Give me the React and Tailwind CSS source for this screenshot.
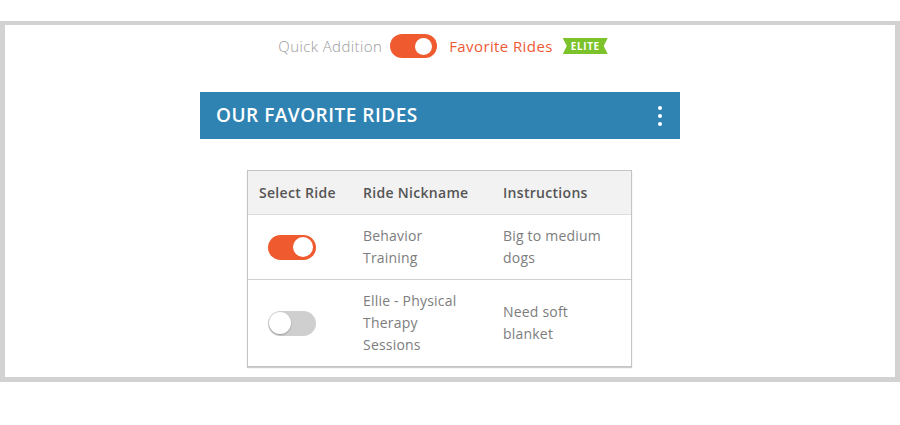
import { useState } from "react";

function Toggle({ on, onChange, big }) {
  return (
    <button
      onClick={onChange}
      className={`relative flex items-center rounded-full transition ${
        big ? "w-[47px] h-[24px]" : "w-[48px] h-[25px]"
      } ${on ? "bg-[#f05a2f]" : "bg-[#cfcfcf]"}`}
    >
      <span
        className={`absolute rounded-full bg-white ${
          on
            ? big
              ? "right-[5px] w-[17px] h-[17px]"
              : "right-[3px] w-[20px] h-[20px]"
            : "left-[1px] w-[22px] h-[22px] shadow-[0_1px_2px_rgba(0,0,0,0.25)]"
        }`}
      ></span>
    </button>
  );
}

const rides = [
  { on: true, name: ["Behavior", "Training"], notes: ["Big to medium", "dogs"] },
  {
    on: false,
    name: ["Ellie - Physical", "Therapy", "Sessions"],
    notes: ["Need soft", "blanket"],
  },
];

export default function App() {
  const [quick, setQuick] = useState(true);
  const [rows, setRows] = useState(rides);

  const flip = i =>
    setRows(rows.map((r, j) => (j === i ? { ...r, on: !r.on } : r)));

  return (
    <div
      className="w-[900px] h-[425px] bg-white pt-[21px]"
      style={{ fontFamily: "'Open Sans', 'Liberation Sans', sans-serif" }}
    >
      <div className="h-[361px] border-[5px] border-[#d2d2d2] border-t-4">
        <div className="w-[480px] ml-[195px]">
          <div className="flex items-center justify-center pt-[9px] pl-[6px]">
            <span className="text-[15px] text-[#9b9b9b] font-light tracking-[0.4px]">
              Quick Addition
            </span>
            <div className="ml-[8px]">
              <Toggle big on={quick} onChange={() => setQuick(!quick)} />
            </div>
            <span className="ml-[12px] text-[15px] text-[#ee5a35] font-medium tracking-[0.4px]">
              Favorite Rides
            </span>
            <span className="ml-[10px] h-[16px] px-[8px] flex items-center bg-[#7cc22a] text-white text-[10px] font-bold tracking-[0.6px] [clip-path:polygon(0_0,100%_0,calc(100%-4px)_50%,100%_100%,0_100%,4px_50%)]">
              ELITE
            </span>
          </div>

          <div className="mt-[34px] h-[47px] bg-[#2f83b3] flex items-center justify-between pl-[16px] pr-[18px]">
            <h1 className="text-white text-[19px] font-semibold tracking-[0.5px]">
              OUR FAVORITE RIDES
            </h1>
            <div className="flex flex-col gap-[4px]">
              <span className="w-[4px] h-[4px] rounded-full bg-white"></span>
              <span className="w-[4px] h-[4px] rounded-full bg-white"></span>
              <span className="w-[4px] h-[4px] rounded-full bg-white"></span>
            </div>
          </div>

          <div className="mt-[31px] ml-[47px] w-[385px] border border-[#c4c4c4] shadow-[0_1px_1px_rgba(0,0,0,0.2)]">
            <div className="flex h-[44px] items-center bg-[#f2f2f2] border-b border-[#dcdcdc] text-[14px] font-semibold text-[#555] tracking-[0.3px]">
              <div className="w-[103px] px-[11px]">Select Ride</div>
              <div className="w-[140px] px-[12px]">Ride Nickname</div>
              <div className="flex-1 px-[12px]">Instructions</div>
            </div>
            {rows.map((r, i) => (
              <div
                key={i}
                className={`flex items-center py-[10px] text-[14px] leading-[22px] text-[#7d7d7d] tracking-[0.2px] ${
                  i < rows.length - 1 ? "border-b border-[#cfcfcf]" : ""
                }`}
              >
                <div className="w-[103px] pl-[20px]">
                  <Toggle on={r.on} onChange={() => flip(i)} />
                </div>
                <div className="w-[140px] px-[12px]">
                  {r.name.map((l, k) => (
                    <div key={k}>{l}</div>
                  ))}
                </div>
                <div className="flex-1 px-[12px]">
                  {r.notes.map((l, k) => (
                    <div key={k}>{l}</div>
                  ))}
                </div>
              </div>
            ))}
          </div>
        </div>
      </div>
    </div>
  );
}
